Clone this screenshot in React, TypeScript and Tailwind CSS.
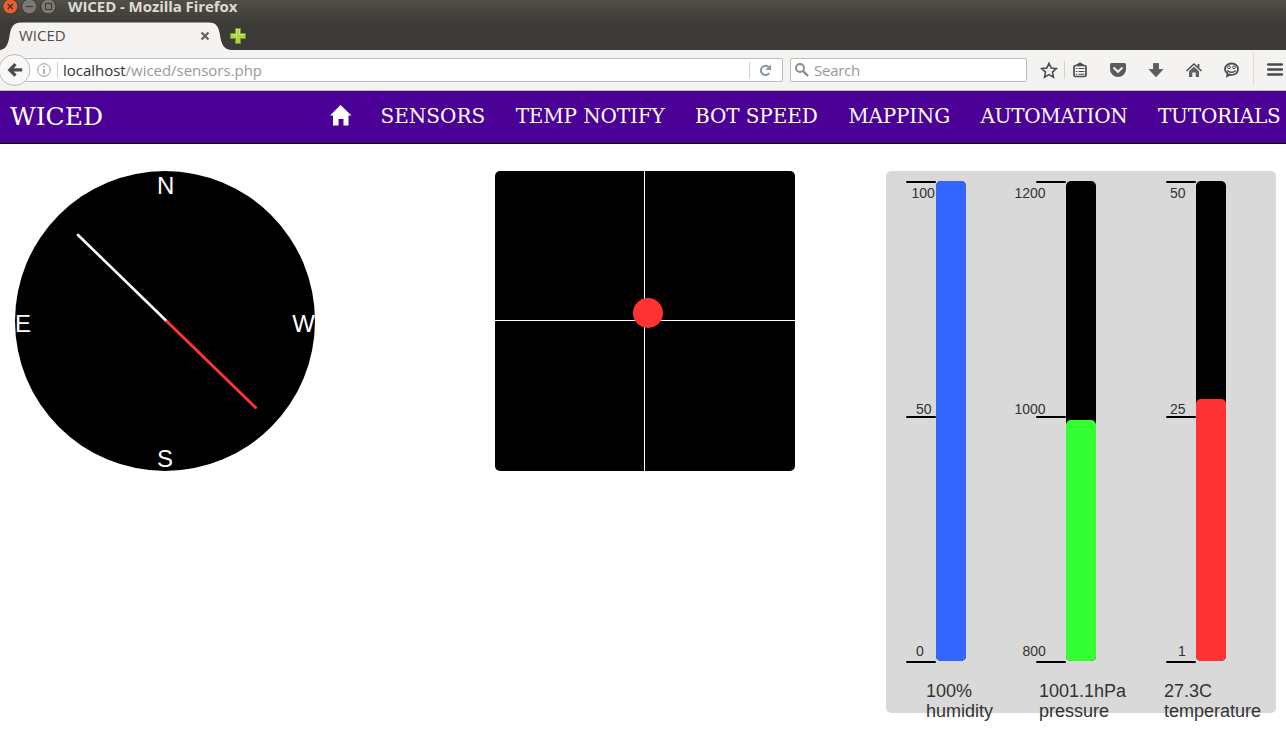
import React from 'react';

const UI = "font-['Open_Sans','Noto_Sans',sans-serif]";

function WindowButton({ kind }: { kind: 'close' | 'min' | 'max' }) {
  const close = kind === 'close';
  return (
    <svg width="19" height="15" viewBox="0 0 19 15" className="block">
      <circle cx="10.300" cy="6.500" r="7.900" fill="#35342f" />
      <circle cx="10.300" cy="6.500" r="7.100" fill={close ? '#e9602f' : '#7b7a72'} />
      {kind === 'close' && <path d="M7.800 4l5 5M12.800 4l-5 5" stroke="#4d2a1b" strokeWidth="1.300" />}
      {kind === 'min' && <path d="M6.800 6.500h7" stroke="#3c3b37" strokeWidth="1.200" />}
      {kind === 'max' && <rect x="7.500" y="3.500" width="6" height="6" fill="none" stroke="#3c3b37" strokeWidth="1.100" />}
    </svg>
  );
}

function TitleBar() {
  return (
    <div className="flex h-[22px] items-start bg-linear-to-b from-[#524f48] to-[#3d3c37]">
      <WindowButton kind="close" />
      <WindowButton kind="min" />
      <WindowButton kind="max" />
      <span className={`${UI} ml-[11px] text-[15px] leading-[12px] font-bold tracking-[-0.07px] whitespace-nowrap text-[#dfdbd2]`}>
        WICED - Mozilla Firefox
      </span>
    </div>
  );
}

function TabStrip() {
  return (
    <div className="grid h-[28px] bg-[#3c3b37]">
      <svg width="240" height="28" className="col-start-1 row-start-1 block">
        <path d="M0 28C6 27 8 23 9.500 14C11 4 14 .5 21 .5H209C216 .5 218.500 4 220 13C221.500 23 224 27 231 28Z" fill="#f4f3f1" />
      </svg>
      <div className="col-start-1 row-start-1 flex items-center">
        <span className={`${UI} w-[180px] pb-[2px] pl-[19px] text-[15px] leading-[20px] text-[#4c4c4c]`}>WICED</span>
        <svg width="12" height="12" className="ml-[19px] block">
          <path d="M2.500 2.500l7 7M9.500 2.500l-7 7" stroke="#65635e" strokeWidth="2.300" />
        </svg>
        <svg width="18" height="18" className="ml-[18px] block">
          <path d="M6.500 1.500h5v5h5v5h-5v5h-5v-5h-5v-5h5z" fill="#b3d33c" stroke="#6c9a2c" />
          <path d="M7.500 11V2.500h3v5h5M2.500 7.500h5" fill="none" stroke="#d0e47c" />
        </svg>
      </div>
    </div>
  );
}

function ToolbarIcons() {
  return (
    <svg width="259" height="40" viewBox="1027 50 259 40" className="block" fill="none" stroke="#4b4b4b">
      <path d="M1049 63.300l2.200 4.700 5.100.6-3.800 3.500 1 5.100-4.500-2.600-4.500 2.600 1-5.100-3.800-3.500 5.100-.6z" strokeWidth="1.600" />
      <path d="M1064.500 61v18" stroke="#d3d2d0" />
      <rect x="1074" y="65.500" width="12" height="11" rx="1.500" strokeWidth="1.700" />
      <path d="M1076.500 65c1-1 2-.8 3.500-2.300 1.500 1.500 2.500 1.300 3.500 2.300z" fill="#4b4b4b" />
      <path d="M1075.800 68.500h1.500M1075.800 71.500h1.500M1075.800 74.200h1.500M1078.500 68.500h6M1078.500 71.500h6M1078.500 74.200h6" strokeWidth="1.100" />
      <path d="M1111.500 63h13q1.500 0 1.500 1.500v5a8 7.500 0 0 1-16 0v-5q0-1.500 1.500-1.500z" fill="#5b5b5b" stroke="none" />
      <path d="M1113.500 67.500l4.500 4.300 4.500-4.300" stroke="#f4f3f1" strokeWidth="2" />
      <path d="M1153.500 63.500h5v6h4.300l-6.800 7.300-6.800-7.300h4.300z" fill="#5d5d5d" stroke="#4b4b4b" strokeWidth=".7" />
      <path d="M1186.500 71l7.500-7 7.500 7" strokeWidth="1.500" />
      <path d="M1198.500 64v3.500" strokeWidth="1.700" />
      <path d="M1189 71.300l5-4.700 5 4.700v5.700h-3.300v-4.500h-3.400v4.500h-3.300z" fill="#626262" stroke="none" />
      <path d="M1231.500 63.500c4.200 0 6.500 2.500 6.500 5.700s-2.700 5.600-6.500 5.600c-.7 0-1.300 0-1.900-.2l-2.400 1.400.3-2.800c-1.600-1-2.500-2.400-2.500-4 0-3.200 2.600-5.700 6.500-5.700z" strokeWidth="1.800" />
      <circle cx="1229" cy="67.300" r="1.400" strokeWidth="1" />
      <circle cx="1234" cy="67.300" r="1.400" strokeWidth="1" />
      <path d="M1227.300 70.500c2 2.400 6.400 2.400 8.400 0" strokeWidth="1.500" />
      <path d="M1253.500 53v33" stroke="#dddcda" />
      <path d="M1268.300 64.500h13.500M1268.300 69.500h13.500M1268.300 74.500h13.500" strokeWidth="2.600" strokeLinecap="round" />
    </svg>
  );
}

function Toolbar() {
  return (
    <div className="flex h-[41px] items-center border-b border-[#bcbbb9] bg-[#f4f3f1]">
      <svg width="32" height="34" className="z-10 block shrink-0">
        <circle cx="14.500" cy="17" r="15.500" fill="#f8f7f6" stroke="#bcbab7" />
        <path d="M15.500 11.200L9.800 16.900l5.700 5.700M10 16.900h12.200" fill="none" stroke="#4b4b4b" strokeWidth="3.200" />
      </svg>
      <div className="-ml-[8px] flex h-[24px] w-[759px] shrink-0 items-center rounded-[2px] border border-[#bfbdb9] bg-white">
        <svg width="35" height="22" className="block shrink-0">
          <circle cx="19" cy="11" r="6.300" fill="none" stroke="#999" />
          <path d="M19 10v5M19 7v1.600" stroke="#999" strokeWidth="1.500" />
          <path d="M32.500 3v16" stroke="#d0cfcd" />
        </svg>
        <span className={`${UI} ml-[3px] grow text-[15px] leading-[20px] tracking-[-0.03px] whitespace-nowrap text-[#999]`}>
          <span className="text-[#333]">localhost</span>/wiced/sensors.php
        </span>
        <svg width="33" height="22" className="block shrink-0">
          <path d="M.5 3v16" stroke="#d0cfcd" />
          <path d="M19.500 8A4.600 4.600 0 1 0 20.300 14" fill="none" stroke="#8796a3" strokeWidth="2" />
          <path d="M22 5.500v5.500h-5.500z" fill="#8796a3" />
        </svg>
      </div>
      <div className="ml-[7px] flex h-[24px] w-[237px] shrink-0 items-center rounded-[2px] border border-[#bfbdb9] bg-white">
        <svg width="20" height="22" className="block">
          <circle cx="9" cy="9" r="4" fill="none" stroke="#8c8c8c" strokeWidth="1.900" />
          <path d="M12 12l5 5" stroke="#8c8c8c" strokeWidth="2.400" />
        </svg>
        <span className={`${UI} ml-[3px] text-[15px] leading-[20px] tracking-[-0.25px] text-[#999]`}>Search</span>
      </div>
      <ToolbarIcons />
    </div>
  );
}

const links = [
  { label: 'SENSORS', spacing: '' },
  { label: 'TEMP NOTIFY', spacing: 'tracking-[-0.15px]' },
  { label: 'BOT SPEED', spacing: 'tracking-[-0.1px]' },
  { label: 'MAPPING', spacing: 'tracking-[-0.2px]' },
  { label: 'AUTOMATION', spacing: 'tracking-[-0.3px]' },
  { label: 'TUTORIALS', spacing: 'tracking-[-0.2px]' },
];

function SiteNav() {
  return (
    <nav className="flex h-[53px] items-start justify-between border-b border-black bg-[#4b0096] pr-[5.500px] pl-[10px] font-['DejaVu_Serif',serif] whitespace-nowrap text-white">
      <a className="mt-[11px] text-[25px] leading-[30px]">WICED</a>
      <div className="mt-[13px] flex items-start gap-[30.500px] text-[20px] leading-[25px]">
        <svg width="20" height="25" viewBox="0 0 20 25" className="block overflow-visible" fill="#fff">
          <path d="M10.500 1L21.500 11.500H18.500V21.500H13.500V15H8.500V21.500H3V11.500H0z" />
        </svg>
        {links.map((l) => (
          <a key={l.label} className={l.spacing}>{l.label}</a>
        ))}
      </div>
    </nav>
  );
}

function Compass() {
  return (
    <svg width="300" height="300" className="block shrink-0 font-['Liberation_Sans',sans-serif] text-[24px]">
      <circle cx="150" cy="150" r="150" />
      <g fill="#fff">
        <text x="142" y="23">N</text>
        <text x="0" y="161">E</text>
        <text x="277.300" y="161">W</text>
        <text x="142" y="296">S</text>
      </g>
      <path d="M63 64L152 150.500" stroke="#fff" strokeWidth="2.600" strokeLinecap="round" />
      <path d="M152 150.500L240.500 236.500" stroke="#f33" strokeWidth="3" strokeLinecap="round" />
    </svg>
  );
}

function TiltPad() {
  return (
    <svg width="300" height="300" className="block shrink-0">
      <rect width="300" height="300" rx="5" />
      <path d="M149.500 0v300M0 149.500h300" stroke="#fff" />
      <circle cx="153" cy="142" r="15" fill="#f33" />
    </svg>
  );
}

const gauges = [
  { x: 50, top: 10, color: '#3366ff', ticks: [['100', 25.4], ['50', 30], ['0', 30]], value: '100%', name: 'humidity', tx: 40 },
  { x: 180, top: 249, color: '#33ff33', ticks: [['1200', 128.4], ['1000', 128.4], ['800', 136.4]], value: '1001.1hPa', name: 'pressure', tx: 153 },
  { x: 310, top: 228, color: '#ff3333', ticks: [['50', 284], ['25', 284], ['1', 292]], value: '27.3C', name: 'temperature', tx: 278 },
] as const;

const tickY = [11, 246, 491];
const labelY = [27, 243, 485];

function Gauges() {
  return (
    <svg width="390" height="555" className="block shrink-0 font-['Liberation_Sans',sans-serif]">
      <rect width="390" height="542" rx="5" fill="#d9d9d9" />
      {gauges.map((g) => (
        <g key={g.name}>
          {g.ticks.map(([label, x], i) => (
            <g key={label}>
              <path d={`M${g.x - 29} ${tickY[i]}h28`} stroke="#000" strokeWidth="2" strokeLinecap="round" />
              <text x={x} y={labelY[i]} className="text-[14px]" fill="#333">{label}</text>
            </g>
          ))}
          <rect x={g.x} y="10" width="30" height="480" rx="5" />
          <rect x={g.x} y={g.top} width="30" height={490 - g.top} rx="5" fill={g.color} />
          <text x={g.tx} y="526" className="text-[18px]" fill="#333">{g.value}</text>
          <text x={g.tx} y="546" className="text-[18px]" fill="#333">{g.name}</text>
        </g>
      ))}
    </svg>
  );
}

export default function App() {
  return (
    <div className="h-[734px] w-[1286px] overflow-hidden bg-white">
      <TitleBar />
      <TabStrip />
      <Toolbar />
      <SiteNav />
      <main className="flex items-start pt-[27px] pl-[15px]">
        <Compass />
        <div className="ml-[180px]"><TiltPad /></div>
        <div className="ml-[91px]"><Gauges /></div>
      </main>
    </div>
  );
}
